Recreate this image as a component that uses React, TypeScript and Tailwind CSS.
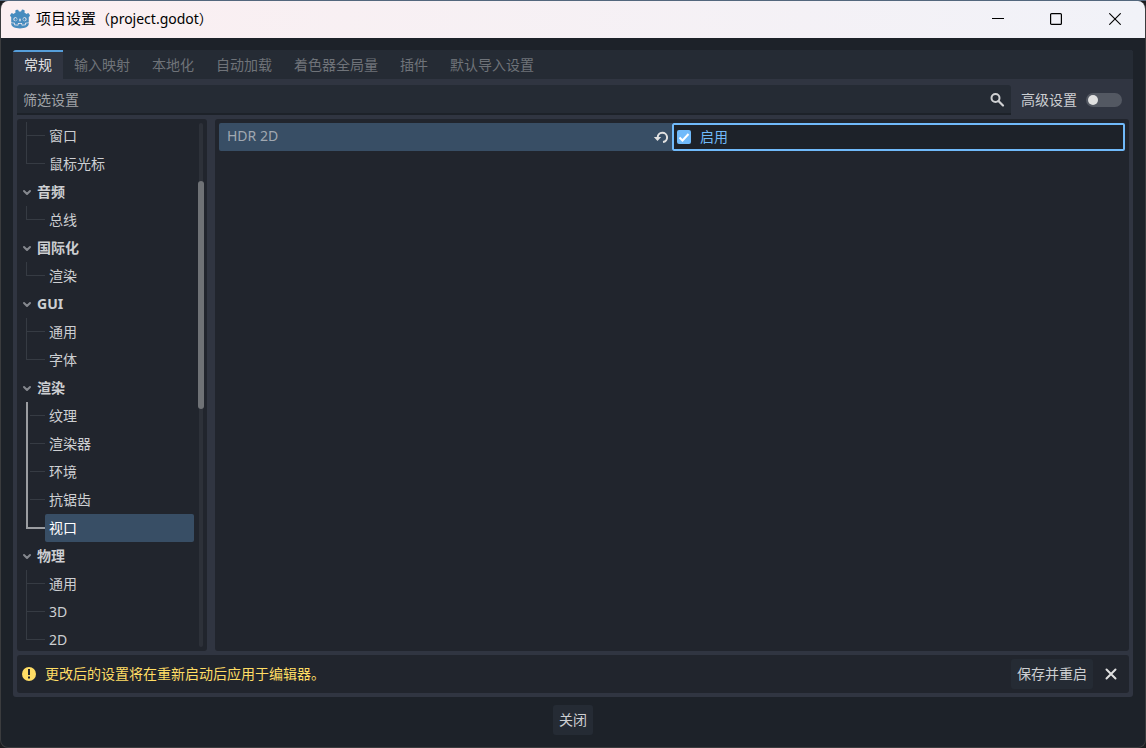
import { useState } from "react";
import { SiGodotengine } from "react-icons/si";

type Section = { name?: string; items: string[] };

const sections: Section[] = [
  { items: ["窗口", "鼠标光标"] },
  { name: "音频", items: ["总线"] },
  { name: "国际化", items: ["渲染"] },
  { name: "GUI", items: ["通用", "字体"] },
  { name: "渲染", items: ["纹理", "渲染器", "环境", "抗锯齿", "视口"] },
  { name: "物理", items: ["通用", "3D", "2D"] },
];

const tabs = ["常规", "输入映射", "本地化", "自动加载", "着色器全局量", "插件", "默认导入设置"];

function TitleBar() {
  return (
    <header className="flex h-[37px] shrink-0 items-center bg-linear-to-r from-[#fbeff1] to-[#f1f2f8] pb-0.5 pl-[9px] text-black">
      <SiGodotengine className="size-5 text-[#478cbf]" aria-hidden="true" />
      <h1 className="ml-1.5 flex-1 text-[15px] leading-5">
        项目设置<span className="text-sm">（project.godot）</span>
      </h1>
      <button aria-label="最小化" className="flex h-full w-[58px] items-center justify-center">
        <svg className="size-3" viewBox="0 0 12 12" stroke="currentColor" fill="none">
          <path d="M0 5.5h12" />
        </svg>
      </button>
      <button aria-label="最大化" className="flex h-full w-[58px] items-center justify-center">
        <svg className="size-3" viewBox="0 0 12 12" stroke="currentColor" fill="none">
          <rect x="0.6" y="0.6" width="10.8" height="10.8" rx="1" strokeWidth="1.2" />
        </svg>
      </button>
      <button aria-label="关闭窗口" className="flex h-full w-[60px] items-center justify-center">
        <svg className="size-3" viewBox="0 0 12 12" stroke="currentColor" fill="none">
          <path d="m.3.3 11.4 11.4M11.7.3.3 11.7" strokeWidth="1.1" />
        </svg>
      </button>
    </header>
  );
}

function Branch({ last, current, beforeCurrent }: { last: boolean; current: boolean; beforeCurrent: boolean }) {
  return (
    <svg className="h-7 w-5 shrink-0" viewBox="0 0 20 28" fill="none" aria-hidden="true">
      {current ? (
        <path d="M2 0v14h18" stroke="#9b9da1" strokeWidth="2" />
      ) : beforeCurrent ? (
        <>
          <path d="M2 0v28" stroke="#9b9da1" strokeWidth="2" />
          <path d="M5 13.5h15" stroke="#363b43" />
        </>
      ) : (
        <>
          <path d={last ? "M1.5 0v14" : "M1.5 0v28"} stroke="#363b43" />
          <path d="M2 13.5h18" stroke="#363b43" />
        </>
      )}
    </svg>
  );
}

function Tree({ selected, onSelect }: { selected: string; onSelect: (key: string) => void }) {
  return (
    <nav aria-label="设置分类" className="flex w-[190px] shrink-0 rounded-[3px] bg-[#21252d] pt-[3px]">
      <ul className="min-w-0 flex-1 overflow-hidden pl-2">
        {sections.map((section) => {
          const name = section.name ?? "";
          const current = section.items.findIndex((item) => `${name}/${item}` === selected);
          return (
            <li key={name}>
              {section.name && (
                <button className="flex h-7 w-full items-center font-bold text-[#cdcfd2]">
                  <svg className="size-3 shrink-0" viewBox="0 0 12 12" fill="none" overflow="visible" aria-hidden="true">
                    <path d="M-1 5 2 8l3-3" stroke="#85888e" strokeWidth="2" strokeLinecap="round" strokeLinejoin="round" />
                  </svg>
                  {section.name}
                </button>
              )}
              <ul>
                {section.items.map((item, i) => (
                  <li key={item} className="flex">
                    <Branch
                      last={i === section.items.length - 1}
                      current={i === current}
                      beforeCurrent={i < current}
                    />
                    <button
                      onClick={() => onSelect(`${name}/${item}`)}
                      className={
                        i === current
                          ? "mr-[3px] h-7 flex-1 rounded-[2px] bg-[#384e65] pl-1 text-left text-white"
                          : "mr-[3px] h-7 flex-1 pl-1 text-left"
                      }
                    >
                      {item}
                    </button>
                  </li>
                ))}
              </ul>
            </li>
          );
        })}
      </ul>
      <div className="flex w-2.5 shrink-0 flex-col items-start pb-1">
        <div className="mt-px ml-[2px] h-[58px] w-1 rounded-t-full bg-[#2d3139]" />
        <div className="ml-px h-[228px] w-1.5 shrink-0 rounded-full bg-[#6f7276]" />
        <div className="ml-[2px] w-1 flex-1 rounded-b-full bg-[#2d3139]" />
      </div>
    </nav>
  );
}

export default function App() {
  const [selected, setSelected] = useState("渲染/视口");
  const [hdr, setHdr] = useState(true);
  const [advanced, setAdvanced] = useState(false);

  return (
    <div className="flex h-screen flex-col bg-[#1c1d20] font-['Noto_Sans','Noto_Sans_CJK_SC',sans-serif] text-sm leading-5 text-[#cdcfd2]">
      <div className="h-px shrink-0 bg-[#53677d]" />
      <div className="flex min-h-0 flex-1 flex-col overflow-hidden rounded-lg border-x border-b border-[#3b3c3e] bg-[#1d2229]">
        <TitleBar />
        <main className="mx-3 mt-3 flex min-h-0 flex-1 flex-col overflow-hidden rounded-[3px] bg-[#303541]">
          <div role="tablist" className="flex h-[29px] shrink-0 bg-[#252b34]">
            {tabs.map((tab, i) => (
              <button
                key={tab}
                role="tab"
                aria-selected={i === 0}
                className={
                  i === 0
                    ? "border-t-2 border-[#569eda] bg-[#303541] px-[11px] pb-0.5 text-[#e0e1e3]"
                    : "border-t-2 border-transparent px-[11px] pb-0.5 text-[#6f7379]"
                }
              >
                {tab}
              </button>
            ))}
          </div>

          <div className="flex min-h-0 flex-1 flex-col gap-1 px-1 pt-1.5 pb-1">
            <div className="flex h-[30px] shrink-0 items-center">
              <label className="flex h-full min-w-0 flex-1 items-center rounded-t-[3px] border-b-2 border-[#1d2229] bg-[#252b34] pt-0.5 pr-1.5 pl-1.5">
                <input
                  type="text"
                  aria-label="筛选设置"
                  placeholder="筛选设置"
                  className="min-w-0 flex-1 bg-transparent outline-none placeholder:text-[#a0a3a7]"
                />
                <svg className="size-4 shrink-0" viewBox="0 0 16 16" fill="none" stroke="#cfd0d2" aria-hidden="true">
                  <circle cx="6.5" cy="6" r="4" strokeWidth="2" />
                  <path d="m9.5 9 4.5 4.5" strokeWidth="2.2" strokeLinecap="round" />
                </svg>
              </label>
              <label className="mr-[7px] ml-2.5 flex items-center gap-[9px]">
                高级设置
                <input
                  type="checkbox"
                  role="switch"
                  checked={advanced}
                  onChange={(e) => setAdvanced(e.target.checked)}
                  className="h-3.5 w-9 appearance-none rounded-full bg-[#535862] p-0.5 before:block before:size-2.5 before:rounded-full before:bg-[#e0e0e0] checked:bg-[#569eda] checked:before:ml-auto"
                />
              </label>
            </div>

            <div className="flex min-h-0 flex-1 gap-2">
              <Tree selected={selected} onSelect={setSelected} />
              <section className="min-w-0 flex-1 rounded-[3px] bg-[#21252d] p-1">
                <div className="grid h-7 grid-cols-2">
                  <div className="flex min-w-0 items-center rounded-l-[2px] bg-[#384e65] pr-[3px] pl-2">
                    <label htmlFor="hdr" className="flex-1 pb-0.5 text-[#a0a8b1]">
                      HDR 2D
                    </label>
                    <button aria-label="还原默认值" onClick={() => setHdr(false)}>
                      <svg className="size-4" viewBox="0 0 16 16" fill="none" aria-hidden="true">
                        <path d="M4.7 8.5a4.7 4.7 0 1 1 5.3 4.6" stroke="#e0e0e0" strokeWidth="2" />
                        <path d="M.8 8h7.4l-3.7 4z" fill="#e0e0e0" />
                      </svg>
                    </button>
                  </div>
                  <label className="flex min-w-0 items-center gap-[9px] rounded-[2px] border-2 border-[#70bafa] bg-[#1d2229] pl-[3px] text-[#70bafa]">
                    <span className="grid size-3.5 place-items-center">
                      <input
                        id="hdr"
                        type="checkbox"
                        checked={hdr}
                        onChange={(e) => setHdr(e.target.checked)}
                        className="col-start-1 row-start-1 size-3.5 appearance-none rounded-[2px] bg-[#535862] checked:bg-[#70bafa]"
                      />
                      {hdr && (
                        <svg className="pointer-events-none col-start-1 row-start-1 size-3.5" viewBox="0 0 14 14" fill="none" aria-hidden="true">
                          <path d="m2.5 7.5 3 3 6-6.500" stroke="#fff" strokeWidth="2" />
                        </svg>
                      )}
                    </span>
                    启用
                  </label>
                </div>
              </section>
            </div>

            <div className="flex h-[38px] shrink-0 items-center rounded-[3px] bg-[#21252d] px-1">
              <svg className="size-4 shrink-0" viewBox="0 0 16 16" aria-hidden="true">
                <circle cx="8" cy="8" r="7" fill="#ffdd65" />
                <path d="M8 3v6M8 10.5v2" stroke="#21252d" strokeWidth="2" />
              </svg>
              <p className="ml-2 flex-1 text-[#ffdd65]">更改后的设置将在重新启动后应用于编辑器。</p>
              <button className="h-[30px] rounded-[3px] bg-[#252b34] px-1.5">保存并重启</button>
              <button aria-label="忽略提示" className="ml-1 flex h-[30px] w-7 items-center justify-center">
                <svg className="size-4" viewBox="0 0 16 16" fill="none" aria-hidden="true">
                  <path d="m3.5 3.5 9 9m0-9-9 9" stroke="#e0e0e0" strokeWidth="2" strokeLinecap="round" />
                </svg>
              </button>
            </div>
          </div>
        </main>
        <footer className="flex h-[50px] shrink-0 items-start justify-center pt-2">
          <button className="h-[30px] rounded-[3px] bg-[#252b34] px-1.5">关闭</button>
        </footer>
      </div>
    </div>
  );
}
